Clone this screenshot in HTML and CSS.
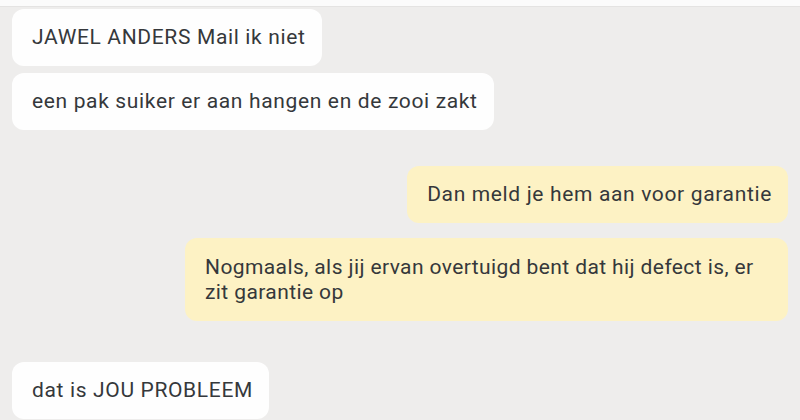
FILE: index.html
```html
<html>
<head>
  <title>Chat</title>
  <link rel="stylesheet" href="styles.css">
</head>
<body>
  <!-- Top app bar edge -->
  <div class="top-bar"></div>

  <!-- Conversation -->
  <div class="chat">
    <div class="bubble them first">JAWEL ANDERS Mail ik niet</div>
    <div class="bubble them">een pak suiker er aan hangen en de zooi zakt</div>

    <div class="bubble me group-start">Dan meld je hem aan voor garantie</div>
    <div class="bubble me wide">Nogmaals, als jij ervan overtuigd bent dat hij defect is, er zit garantie op</div>

    <div class="bubble them group-start last">dat is JOU PROBLEEM</div>
  </div>
</body>
</html>
```

FILE: styles.css
```css
/* Page */
body {
  margin: 0;
  background: #eeedec;
  font-family: Roboto, 'Noto Sans', sans-serif;
  color: #35383b;
  height: 420px;
  overflow: hidden;
}

/* Thin white strip at the top of the screen */
.top-bar {
  height: 6px;
  background: #fbfbfb;
  border-bottom: 1px solid #e4e3e2;
}

/* Message list */
.chat {
  display: flex;
  flex-direction: column;
  gap: 7px;
  padding: 2px 12px 0;
}

/* Message bubble */
.bubble {
  font-size: 21px;
  letter-spacing: 0.65px;
  line-height: 25px;
  padding: 16px 16px 16px 20px;
  border-radius: 12px;
  box-sizing: border-box;
}

.them {
  align-self: flex-start;
  background: #fefefe;
}

.me {
  align-self: flex-end;
  background: #fdf2c4;
}

.group-start {
  margin-top: 29px;
}

.me.wide {
  margin-top: 8px;
  width: 603px;
  padding-top: 17px;
  letter-spacing: 0.4px;
}

.last {
  margin-top: 34px;
}
```
